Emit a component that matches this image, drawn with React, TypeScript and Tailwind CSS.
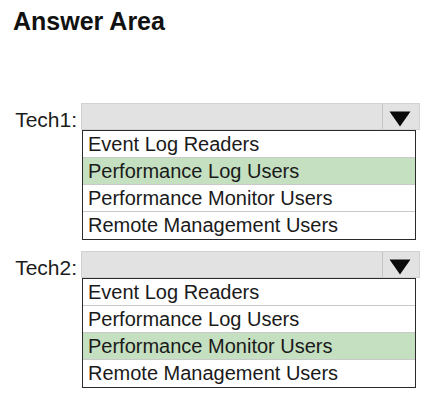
const OPTIONS = [
  'Event Log Readers',
  'Performance Log Users',
  'Performance Monitor Users',
  'Remote Management Users',
]

function ArrowDown() {
  return (
    <svg width="22" height="16" viewBox="0 0 22 16">
      <path d="M0.5 0.5 L21.5 0.5 L11 15.5 Z" fill="#0a0a0a" />
    </svg>
  )
}

function DropdownRow({ label, selected }: { label: string; selected: number }) {
  return (
    <div className="flex">
      <div className="w-[81px] h-[27px] pt-[3px] pr-[4px] text-right text-[21px] leading-[27px] text-[#1c1c1c]">
        {label}
      </div>
      <div className="flex flex-col">
        <div className="flex w-[339px] h-[27px] bg-[#e2e2e2] border border-[#d2d2d2]">
          <div className="flex-1" />
          <div className="w-[37px] h-full border-l border-[#c4c4c4] flex items-center justify-center pt-[5px] pr-[3px]">
            <ArrowDown />
          </div>
        </div>
        <div className="ml-[1px] w-[334px] border border-[#2a2a2a] bg-white">
          {OPTIONS.map((opt, i) => (
            <div
              key={opt}
              className={`h-[27px] pl-[5px] text-[20px] leading-[26px] text-[#1a1a1a] ${
                i < OPTIONS.length - 1 ? 'border-b border-[#c9c9c9]' : ''
              } ${i === selected ? 'bg-[#c5dfc1]' : ''}`}
            >
              {opt}
            </div>
          ))}
        </div>
      </div>
    </div>
  )
}

export default function App() {
  return (
    <div
      className="w-[424px] h-[395px] bg-white overflow-hidden"
      style={{ fontFamily: '"Liberation Sans", Arial, sans-serif' }}
    >
      <h1 className="pl-[13px] pt-[7px] text-[25px] leading-[28px] font-bold text-[#111]">Answer Area</h1>
      <div className="mt-[68px] flex flex-col gap-[11px]">
        <DropdownRow label="Tech1:" selected={1} />
        <DropdownRow label="Tech2:" selected={2} />
      </div>
    </div>
  )
}
